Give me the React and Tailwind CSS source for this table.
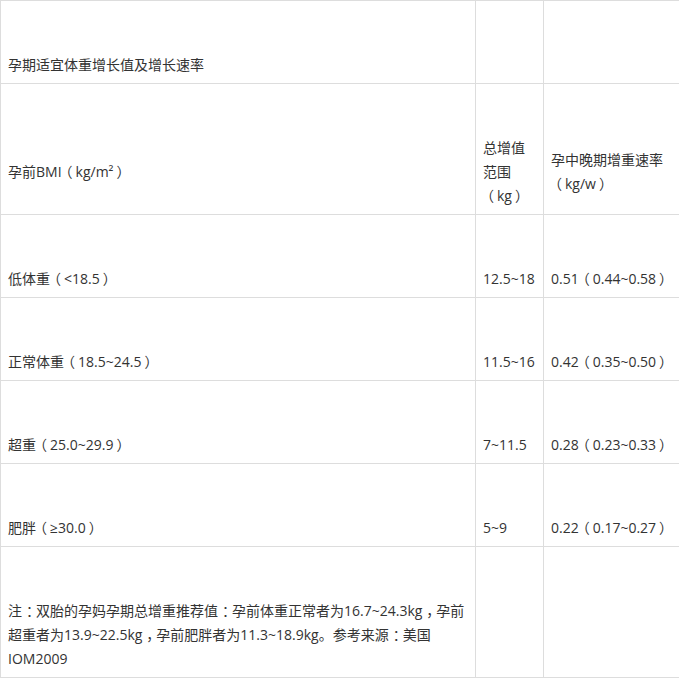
const rows = [
  ['低体重（<18.5）', '12.5~18', '0.51（0.44~0.58）'],
  ['正常体重（18.5~24.5）', '11.5~16', '0.42（0.35~0.50）'],
  ['超重（25.0~29.9）', '7~11.5', '0.28（0.23~0.33）'],
  ['肥胖（≥30.0）', '5~9', '0.22（0.17~0.27）'],
];

// full-width punctuation sits centred in the reference font, nudge it there
const nudge = {
  '（': 'relative -left-[3px]',
  '）': 'relative left-[3px]',
  '：': 'relative left-[4px]',
  '，': 'relative left-[4px]',
};

function T({ children }) {
  return String(children)
    .split(/([（）：，])/)
    .filter(Boolean)
    .map((s, i) =>
      nudge[s] ? (
        <span key={i} className={nudge[s]}>{s}</span>
      ) : (
        s
      )
    );
}

const td = 'border border-[#dddddd] align-middle pl-[7px] pr-[6px] pt-[52px] pb-[6px]';

export default function App() {
  return (
    <div className="w-[679px] h-[679px] overflow-hidden bg-white">
      <table
        className="w-[682px] border-collapse text-[14px] leading-[24px] text-[#333333] table-fixed"
        style={{ fontFamily: '"Open Sans", "Noto Sans CJK SC", sans-serif' }}
      >
        <colgroup>
          <col className="w-[475px]" />
          <col className="w-[68px]" />
          <col />
        </colgroup>
        <tbody>
          <tr>
            <td className={td}>孕期适宜体重增长值及增长速率</td>
            <td className={td}></td>
            <td className={td}></td>
          </tr>
          <tr>
            <td className={td}><T>孕前BMI（kg/m²）</T></td>
            <td className={td}><T>总增值范围（kg）</T></td>
            <td className={td}><T>孕中晚期增重速率（kg/w）</T></td>
          </tr>
          {rows.map((r) => (
            <tr key={r[0]}>
              {r.map((c, i) => (
                <td key={i} className={`${td} whitespace-nowrap`}><T>{c}</T></td>
              ))}
            </tr>
          ))}
          <tr>
            <td className={td}>
              <T>注：双胎的孕妈孕期总增重推荐值：孕前体重正常者为16.7~24.3kg，孕前超重者为13.9~22.5kg，孕前肥胖者为11.3~18.9kg。参考来源：美国IOM2009</T>
            </td>
            <td className={td}></td>
            <td className={td}></td>
          </tr>
        </tbody>
      </table>
    </div>
  );
}
